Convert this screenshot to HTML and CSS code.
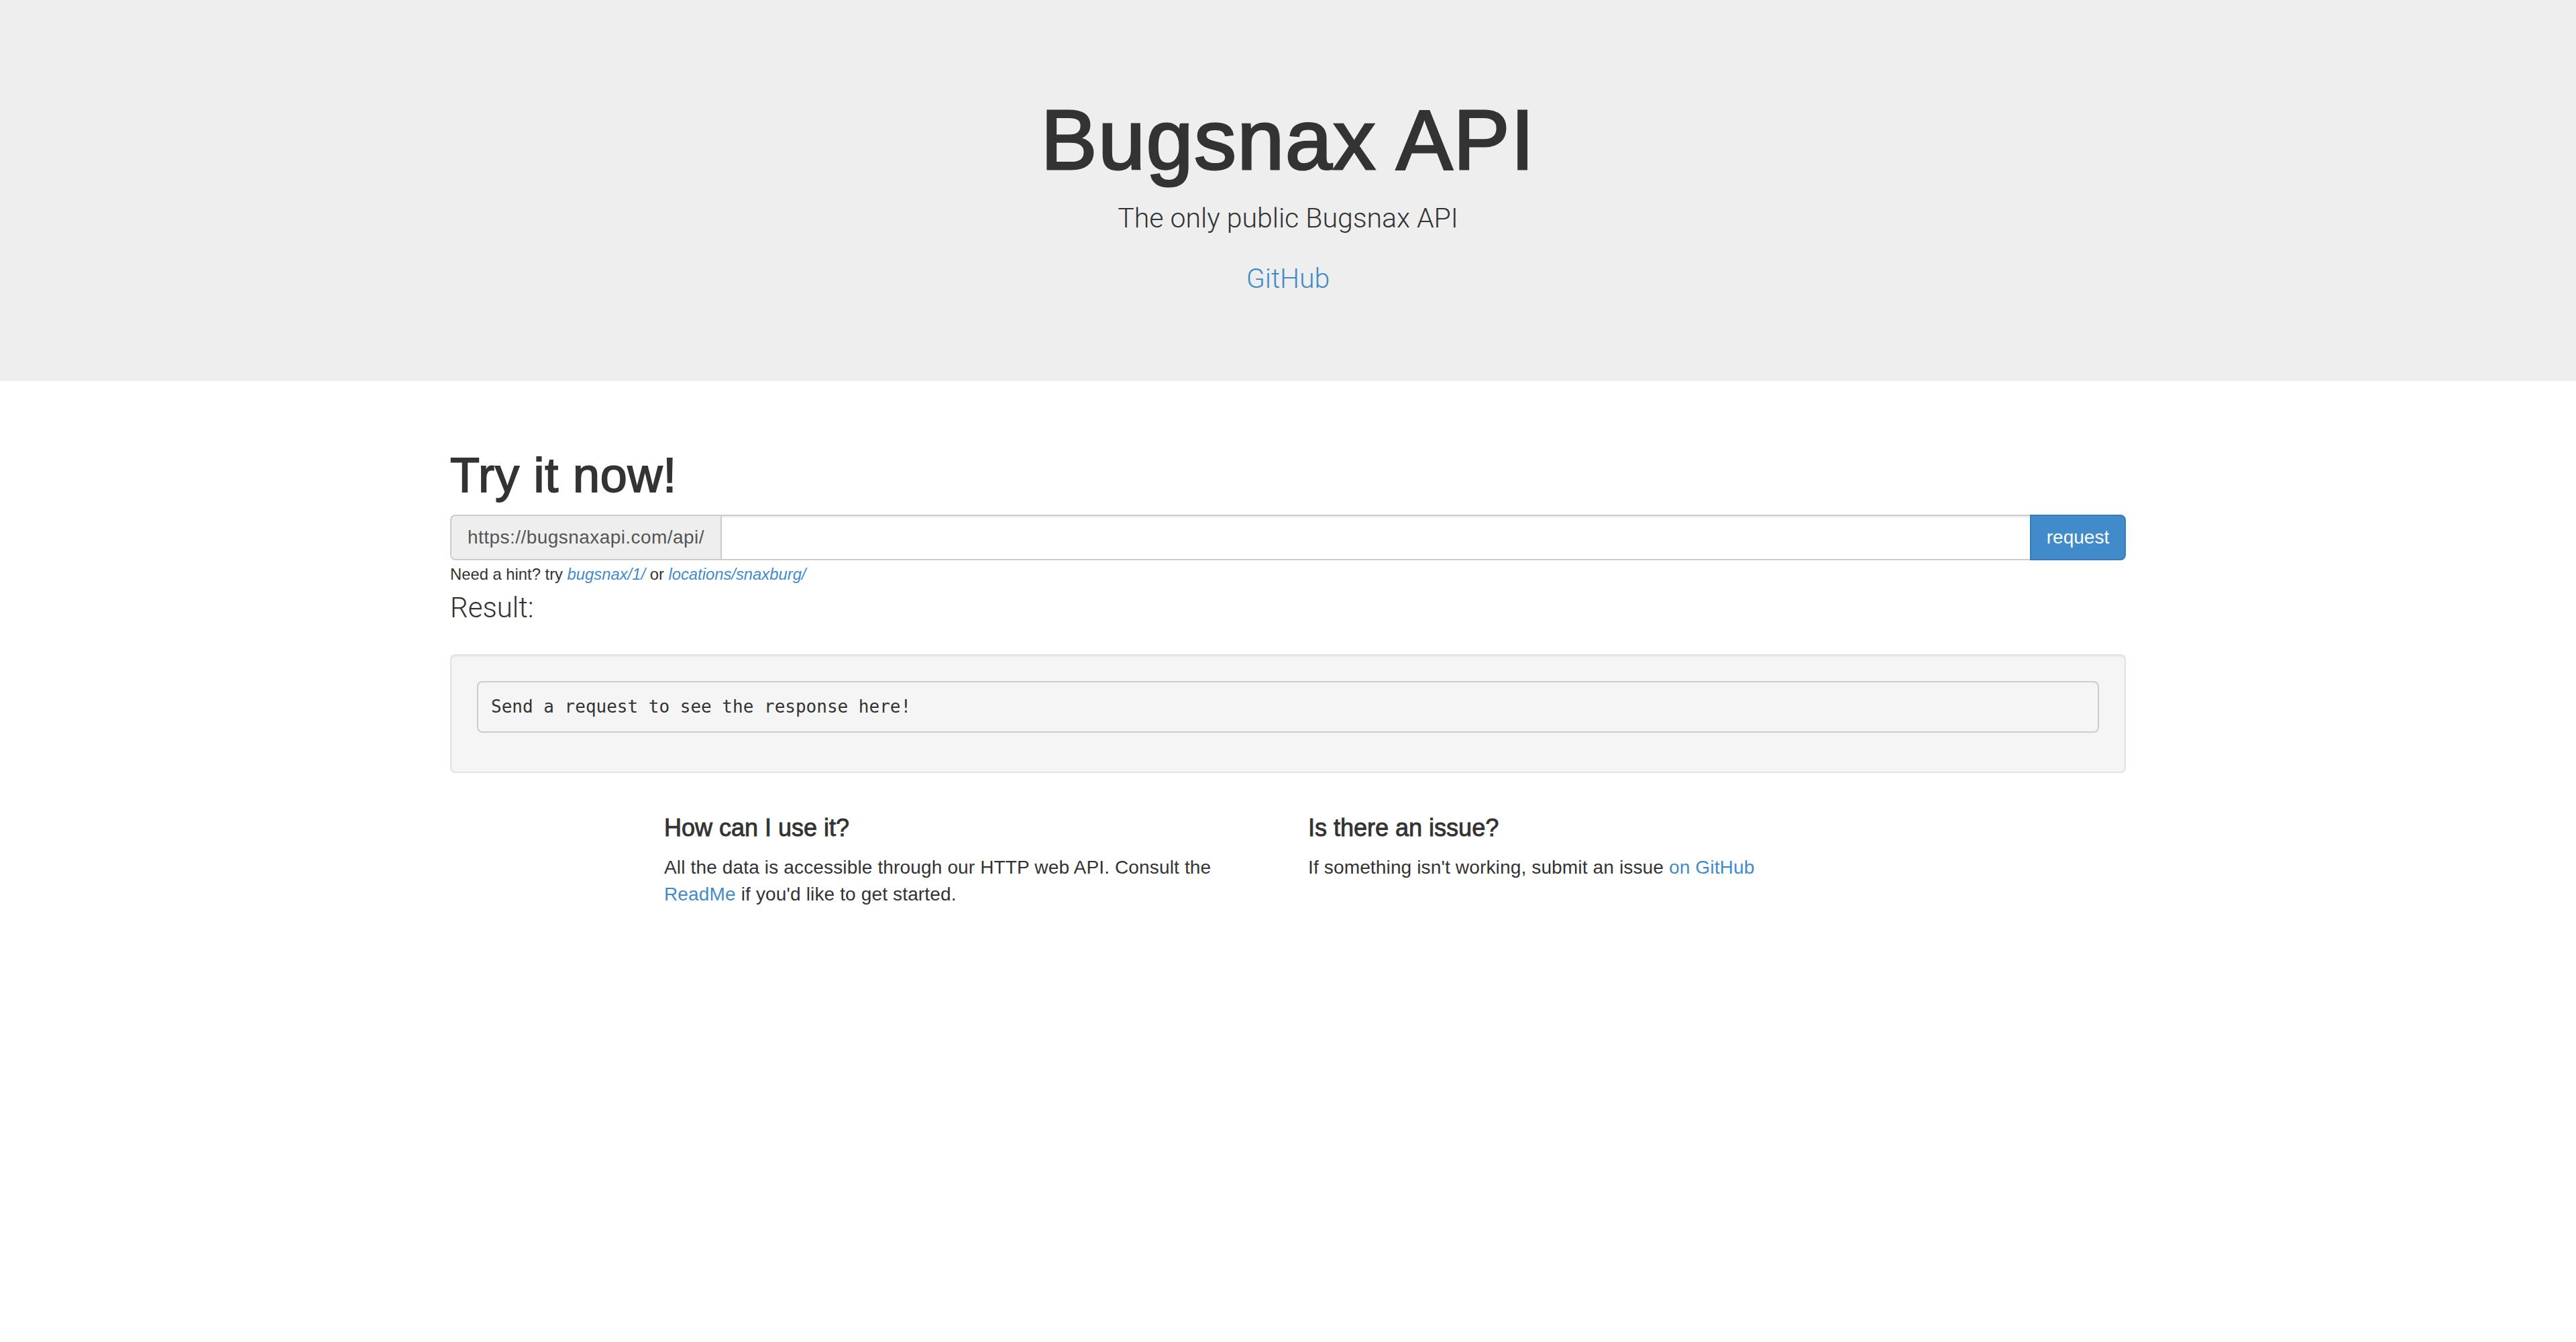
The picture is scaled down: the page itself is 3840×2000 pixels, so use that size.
FILE: index.html
```html
<!DOCTYPE html>
<html lang="en">
<head>
<meta charset="utf-8">
<title>Bugsnax API</title>
<link rel="stylesheet" href="styles.css">
</head>
<body>
<header class="jumbotron">
  <h1 class="title">Bugsnax API</h1>
  <p class="lead-sub">The only public Bugsnax API</p>
  <p class="lead-sub"><a href="#" class="link">GitHub</a></p>
</header>
<main class="container">
  <h1 class="try">Try it now!</h1>
  <div class="input-group">
    <span class="addon">https://bugsnaxapi.com/api/</span>
    <input class="field" type="text" aria-label="endpoint">
    <button class="btn" type="button">request</button>
  </div>
  <div class="hint"><small>Need a hint? try <a href="#" class="link"><i>bugsnax/1/</i></a> or <a href="#" class="link"><i>locations/snaxburg/</i></a></small></div>
  <p class="result-label">Result:</p>
  <div class="well"><pre class="output">Send a request to see the response here!</pre></div>
  <div class="features">
    <div class="feature">
      <h4 class="feature-title">How can I use it?</h4>
      <p class="feature-text">All the data is accessible through our HTTP web API. Consult the <a href="#" class="link">ReadMe</a> if you'd like to get started.</p>
    </div>
    <div class="feature">
      <h4 class="feature-title">Is there an issue?</h4>
      <p class="feature-text">If something isn't working, submit an issue <a href="#" class="link">on GitHub</a></p>
    </div>
  </div>
</main>
</body>
</html>
```
FILE: styles.css
```css
* { box-sizing: border-box; }
html, body { margin: 0; padding: 0; }
body {
  font-family: "Liberation Sans", Arial, sans-serif;
  font-size: 28px;
  line-height: 40px;
  color: #333;
  background: #fff;
}
.link { color: #428bca; text-decoration: none; }

.jumbotron {
  background: #eee;
  padding: 100px 0 93px;
  text-align: center;
}
.title {
  margin: 40px 0 16px;
  font-size: 126px;
  line-height: 138.6px;
  font-weight: 400;
  letter-spacing: 1.4px;
  -webkit-text-stroke: 3px #333;
  color: #333;
}
.lead-sub {
  margin: 0 0 30px;
  font-family: Roboto, "Liberation Sans", sans-serif;
  font-weight: 300;
  font-size: 41px;
  line-height: 60px;
}

.container {
  width: 2498px;
  margin: 0 auto;
  padding-top: 101px;
}
.try {
  margin: 0 0 19px;
  font-size: 72px;
  line-height: 79.2px;
  font-weight: 400;
  letter-spacing: 0.8px;
  -webkit-text-stroke: 1.8px #333;
}
.input-group {
  display: flex;
  height: 68px;
}
.addon {
  flex: none;
  padding: 0 24px;
  line-height: 64px;
  font-size: 28px;
  letter-spacing: 0.45px;
  color: #555;
  background: #eee;
  border: 2px solid #ccc;
  border-right: 0;
  border-radius: 8px 0 0 8px;
}
.field {
  flex: 1;
  min-width: 0;
  height: 68px;
  margin: 0;
  padding: 12px 24px;
  font: inherit;
  border: 2px solid #ccc;
  border-radius: 0;
  background: #fff;
  box-shadow: inset 0 2px 2px rgba(0,0,0,.075);
  outline: none;
}
.btn {
  flex: none;
  width: 143px;
  height: 68px;
  margin: 0 0 0 -2px;
  padding: 0 20px;
  font-family: inherit;
  font-size: 28px;
  line-height: 64px;
  color: #fff;
  background: #428bca;
  border: 2px solid #357ebd;
  border-radius: 0 8px 8px 0;
}
.hint {
  line-height: 40px;
}
.hint small { font-size: 23.8px; }
.result-label {
  margin: 1px 0 39px;
  font-family: Roboto, "Liberation Sans", sans-serif;
  font-weight: 300;
  font-size: 42px;
  line-height: 58.8px;
}
.well {
  background: #f5f5f5;
  border: 2px solid #e3e3e3;
  border-radius: 8px;
  padding: 38px;
  box-shadow: inset 0 2px 2px rgba(0,0,0,.05);
  margin-bottom: 40px;
}
.output {
  margin: 0 0 20px;
  padding: 19px;
  font-family: "DejaVu Sans Mono", "Liberation Mono", monospace;
  font-size: 26px;
  line-height: 35px;
  color: #333;
  background: #f5f5f5;
  border: 2px solid #ccc;
  border-radius: 8px;
}
.features {
  width: 1920px;
  margin: 0 auto;
  display: grid;
  grid-template-columns: 960px 960px;
}
.feature { padding: 0 30px; }
.feature-title {
  margin: 22px 0 20px;
  font-size: 36px;
  line-height: 39.6px;
  font-weight: 400;
  -webkit-text-stroke: 0.9px #333;
}
.feature-text { margin: 0 0 20px; letter-spacing: 0.15px; }
```
